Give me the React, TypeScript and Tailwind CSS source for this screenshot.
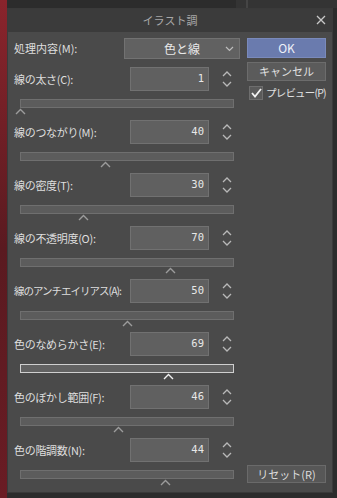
import React from "react";

const rows = [
  { label: "線の太さ(C):", value: "1", pos: 0 },
  { label: "線のつながり(M):", value: "40", pos: 85 },
  { label: "線の密度(T):", value: "30", pos: 63 },
  { label: "線の不透明度(O):", value: "70", pos: 150 },
  { label: "線のアンチエイリアス(A):", value: "50", pos: 107, tight: true },
  { label: "色のなめらかさ(E):", value: "69", pos: 148, focus: true },
  { label: "色のぼかし範囲(F):", value: "46", pos: 98 },
  { label: "色の階調数(N):", value: "44", pos: 145 },
];

const font = { fontFamily: '"Noto Sans CJK JP", "Noto Sans", sans-serif' };

function Caret({ color }: { color: string }) {
  return (
    <svg width="11" height="7" viewBox="0 0 11 7">
      <path d="M1 6 L5.5 1.5 L10 6" fill="none" stroke={color} strokeWidth="1.4" />
    </svg>
  );
}

function Spinner() {
  return (
    <svg width="12" height="20" viewBox="0 0 12 20">
      <path d="M2 7 L6 3 L10 7" fill="none" stroke="#b8b8b8" strokeWidth="1.3" />
      <path d="M2 13 L6 17 L10 13" fill="none" stroke="#b8b8b8" strokeWidth="1.3" />
    </svg>
  );
}

export default function App() {
  return (
    <div className="relative w-[337px] h-[498px] bg-[#2c2c2c] overflow-hidden" style={font}>
      <div className="absolute left-0 top-0 w-[7px] h-[498px] bg-gradient-to-b from-[#8a242c] via-[#5a1a20] to-[#6a1c24]" />
      <div className="absolute left-[236px] top-0 w-[101px] h-[8px] bg-[#343434]" />
      <div className="absolute left-[246px] top-0 w-[2px] h-[8px] bg-[#454545]" />
      <div className="absolute left-[7px] top-[8px] w-[326px] h-[485px] flex flex-col bg-[#4a4a4a] border border-[#3a3a3a] overflow-hidden">
        <div className="h-[23px] bg-[#3b3b3b] flex items-center justify-center relative shrink-0">
          <span className="text-[11px] text-[#a8a8a8]">イラスト調</span>
          <svg className="absolute right-[6px] top-[6px]" width="10" height="10" viewBox="0 0 10 10">
            <path d="M1 1 L9 9 M9 1 L1 9" stroke="#c8c8c8" strokeWidth="1.3" />
          </svg>
        </div>
        <div className="flex items-start pt-[6px] pl-[6px] pr-[7px] gap-[7px]">
          <div className="w-[226px] flex flex-col shrink-0">
            <div className="flex items-center h-[21px] mb-[8px]">
              <span className="w-[110px] text-[11px] text-[#dedede]">処理内容(M):</span>
              <div className="w-[116px] h-[21px] bg-[#616161] border border-[#727272] flex items-center justify-center relative">
                <span className="text-[12px] text-[#e8e8e8]">色と線</span>
                <svg className="absolute right-[5px] top-[7px]" width="9" height="6" viewBox="0 0 9 6">
                  <path d="M1 1 L4.5 4.5 L8 1" fill="none" stroke="#bdbdbd" strokeWidth="1.2" />
                </svg>
              </div>
            </div>
            {rows.map((r, i) => (
              <div key={i} className="h-[53px] flex flex-col">
                <div className="flex items-center h-[24px]">
                  <span className={r.tight ? "w-[116px] text-[10.5px] tracking-[-1px] text-[#dedede] whitespace-nowrap" : "w-[116px] text-[11px] tracking-[-0.3px] text-[#dedede] whitespace-nowrap"}>{r.label}</span>
                  <div className="w-[79px] h-[24px] bg-[#606060] border border-[#717171] flex items-center justify-end pr-[4px]">
                    <span className="text-[10.5px] text-[#e8e8e8]" style={{ fontFamily: '"DejaVu Sans Mono", monospace' }}>{r.value}</span>
                  </div>
                  <div className="ml-[12px]">
                    <Spinner />
                  </div>
                </div>
                <div className="ml-[6px] mt-[8px] w-[214px]">
                  <div className={r.focus ? "h-[9px] bg-[#626262] border border-[#cfcfcf]" : "h-[9px] bg-[#5c5c5c] border border-[#6f6f6f]"} />
                  <div className="h-[8px] relative">
                    <div className="absolute top-0" style={{ left: r.pos - 5 }}>
                      <Caret color={r.focus ? "#f0f0f0" : "#9c9c9c"} />
                    </div>
                  </div>
                </div>
              </div>
            ))}
          </div>
          <div className="w-[79px] h-[445px] flex flex-col shrink-0">
            <div className="h-[20px] bg-[#6a7bae] border border-[#7a8abb] flex items-center justify-center text-[12px] text-[#eef0f8]">OK</div>
            <div className="h-[19px] mt-[4px] bg-[#5b5b5b] border border-[#6c6c6c] flex items-center justify-center text-[11px] text-[#e0e0e0]">キャンセル</div>
            <div className="flex items-center mt-[4px] ml-[2px]">
              <div className="w-[14px] h-[14px] bg-[#5a5a5a] border border-[#6e6e6e] flex items-center justify-center shrink-0">
                <svg width="11" height="10" viewBox="0 0 11 10">
                  <path d="M1 5 L4 8.5 L10 1" fill="none" stroke="#f2f2f2" strokeWidth="1.8" />
                </svg>
              </div>
              <span className="ml-[3px] text-[10.5px] tracking-[-0.8px] text-[#e0e0e0] whitespace-nowrap">プレビュー(P)</span>
            </div>
            <div className="mt-auto h-[18px] bg-[#575757] border border-[#6a6a6a] flex items-center justify-center text-[11px] text-[#dcdcdc]">リセット(R)</div>
          </div>
        </div>
      </div>
    </div>
  );
}
